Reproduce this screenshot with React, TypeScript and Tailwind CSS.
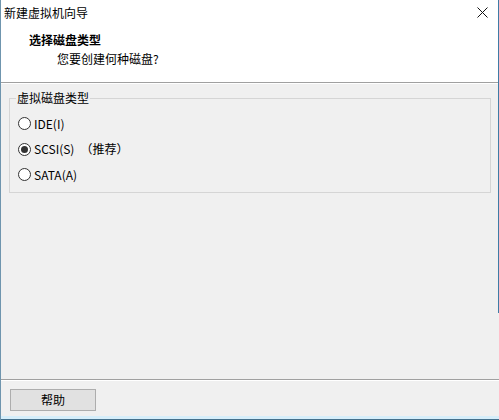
const font = { fontFamily: '"Noto Sans CJK SC", "Noto Sans", sans-serif' };

type RadioProps = { label: string; checked?: boolean; note?: string };

const Radio = ({ label, checked, note }: RadioProps) => (
  <div className="flex h-[25.5px] items-center">
    <span className="flex h-[13px] w-[13px] items-center justify-center rounded-full border border-[#333] bg-white">
      {checked && <span className="h-[7px] w-[7px] rounded-full bg-[#333]" />}
    </span>
    <span className="ml-[3px]">{label}</span>
    {note && <span className="ml-[6px]">{note}</span>}
  </div>
);

const App = () => {
  return (
    <div
      className="relative flex h-[420px] w-[499px] flex-col overflow-hidden border-l border-[#6f95ae] bg-[#f0f0f0] text-[12px] leading-4 text-black"
      style={font}
    >
      {/* title bar */}
      <div className="flex h-[25px] items-center justify-between bg-white pl-[3px] pr-[11px]">
        <span>新建虚拟机向导</span>
        <svg width="11" height="11" viewBox="0 0 11 11">
          <path d="M0.5 0.5 L10.5 10.5 M10.5 0.5 L0.5 10.5" stroke="#111" strokeWidth="1" />
        </svg>
      </div>

      {/* header */}
      <div className="h-[57px] bg-white pl-[28px] pt-[7px]">
        <div className="font-bold">选择磁盘类型</div>
        <div className="mt-[3px] pl-[28px]">您要创建何种磁盘?</div>
      </div>
      <div className="h-[2px] border-t border-[#a0a0a0] bg-white" />

      {/* body */}
      <div className="h-[295px] px-[8px] pt-[6px]">
        <fieldset className="border border-[#d5d5d5] pb-[4px] pl-[8px] pr-2 pt-[5px]">
          <legend className="-ml-[2px] px-[1px]">虚拟磁盘类型</legend>
          <Radio label="IDE(I)" />
          <Radio label="SCSI(S)" checked note="（推荐）" />
          <Radio label="SATA(A)" />
        </fieldset>
      </div>
      <div className="h-[2px] border-t border-[#a0a0a0] bg-white" />

      {/* footer */}
      <div className="h-[35px] pl-[9px] pt-[8px]">
        <button className="h-[22px] w-[86px] border border-[#adadad] bg-[#e1e1e1]">帮助</button>
      </div>
      <div className="h-[3px] bg-[#d6eefa]" />
      <div className="h-px bg-[#44708c]" />

      {/* right window edge */}
      <div className="absolute right-0 top-0 h-[313px] w-px bg-[#3f7ca6]" />
    </div>
  );
};

export default App;
